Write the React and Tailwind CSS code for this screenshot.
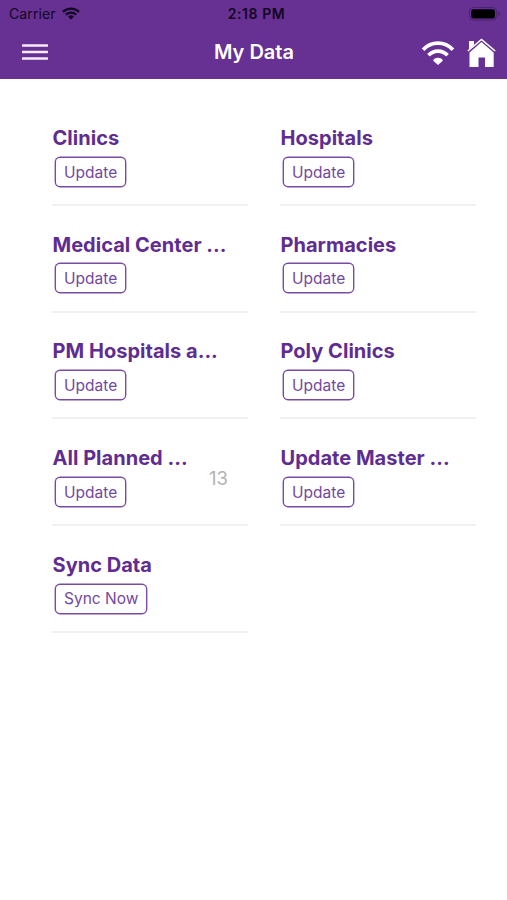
const items = [
  { title: 'Clinics', action: 'Update' },
  { title: 'Hospitals', action: 'Update' },
  { title: 'Medical Center ...', action: 'Update' },
  { title: 'Pharmacies', action: 'Update' },
  { title: 'PM Hospitals a...', action: 'Update' },
  { title: 'Poly Clinics', action: 'Update' },
  { title: 'All Planned ...', action: 'Update', count: 13 },
  { title: 'Update Master ...', action: 'Update' },
  { title: 'Sync Data', action: 'Sync Now' },
];

const StatusWifi = () => (
  <svg width="18" height="13" viewBox="0 0 18 13" fill="none" stroke="#120622" strokeWidth="2.3">
    <path d="M1 4.9 A11.3 11.3 0 0 1 17 4.9" />
    <path d="M3.9 7.8 A7.2 7.2 0 0 1 14.1 7.8" />
    <path d="M9 12.6 L6.1 9.7 A4.1 4.1 0 0 1 11.9 9.7 Z" fill="#120622" stroke="none" />
  </svg>
);

const Battery = () => (
  <svg width="32" height="14" viewBox="0 0 32 14">
    <rect x="0.5" y="0.5" width="27" height="12.6" rx="3.8" fill="none" stroke="#4c2273" />
    <rect x="2.2" y="2.2" width="23.8" height="9.2" rx="2.2" fill="#000" />
    <path d="M29.2 4.7 Q31 5.4 31 6.8 Q31 8.2 29.2 8.9 Z" fill="#4c2273" />
  </svg>
);

const MenuLines = () => (
  <svg width="26" height="17" viewBox="0 0 26 17" fill="#f8ebff">
    <rect y="0.2" width="26" height="2.6" rx="0.5" />
    <rect y="6.7" width="26" height="2.6" rx="0.5" />
    <rect y="13.2" width="26" height="2.6" rx="0.5" />
  </svg>
);

const Wifi = () => (
  <svg width="34" height="26" viewBox="0 0 34 26" fill="none" stroke="#fff" strokeWidth="3.8">
    <path d="M2.1 9.7 C10.2 0.9 23.8 0.9 31.9 9.7" />
    <path d="M7.5 15.2 C12.7 9.7 21.3 9.7 26.5 15.2" />
    <path d="M17 25 L12.2 20.7 C12.6 16.6 21.4 16.6 21.8 20.7 Z" fill="#fff" stroke="none" />
  </svg>
);

const Home = () => (
  <svg width="29" height="30" viewBox="0 0 29 30">
    <path d="M2 3 H7 V7 L2 11.6 Z" fill="#fff" />
    <path d="M0.8 13 L14.5 1.5 L28.2 13" fill="none" stroke="#fff" strokeWidth="1.6" />
    <path d="M14.5 4.1 L26.7 14.4 V29 H18 V19.4 H11.5 V29 H2.5 V14.4 Z" fill="#fff" />
  </svg>
);

const App = () => {
  return (
    <div className="h-[900px] w-[507px] overflow-hidden bg-white font-['Inter','Liberation_Sans',sans-serif]">
      <header className="h-[79px] bg-[#673193]">
        <div className="grid h-[27px] grid-cols-3 items-center pl-[9px] pr-[6px] text-[#120622]">
          <div className="flex items-center gap-[6px]">
            <span className="text-[14px] tracking-[0.1px]">Carrier</span>
            <StatusWifi />
          </div>
          <span className="pl-[3px] text-center text-[14px] font-semibold tracking-[0.6px]">2:18 PM</span>
          <div className="flex justify-end">
            <Battery />
          </div>
        </div>
        <div className="grid h-[50px] grid-cols-[1fr_160px_1fr] items-center pl-[22px] pr-[11px]">
          <button type="button" aria-label="Menu">
            <MenuLines />
          </button>
          <h1 className="mr-[10px] text-center text-[20px] font-semibold leading-[26px] text-white">My Data</h1>
          <div className="flex items-center justify-end gap-[12px] pt-px">
            <Wifi />
            <Home />
          </div>
        </div>
      </header>
      <main className="grid auto-rows-[106.7px] grid-cols-[196px_196px] gap-x-[32px] pl-[52px] pt-[20.3px]">
        {items.map(({ title, action, count }) => (
          <section key={title} className="flex justify-between border-b-2 border-[#f1f1f2] pr-[20px]">
            <div className="pt-[25.7px]">
              <h2 className="whitespace-nowrap pl-[0.5px] text-[20px] font-bold leading-[26px] tracking-[0.03px] text-[#5f2d91]">
                {title}
              </h2>
              <button
                type="button"
                className="ml-[4px] mt-[6.8px] flex h-[28px] items-center rounded-[4px] px-[8px] pt-px text-[15.5px] text-[#7448a0] ring-[1.4px] ring-[#7b4ba3]"
              >
                {action}
              </button>
            </div>
            {count && <span className="pt-[45px] text-[18.5px] leading-[28px] text-[#b3b3b3]">{count}</span>}
          </section>
        ))}
      </main>
    </div>
  );
};

export default App;
